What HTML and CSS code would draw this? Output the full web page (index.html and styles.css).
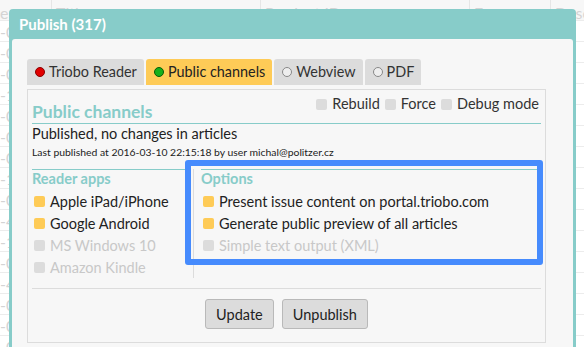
FILE: index.html
```html
<!DOCTYPE html>
<html lang="en">
<head>
  <meta charset="UTF-8" />
  <meta name="viewport" content="width=device-width, initial-scale=1" />
  <title>Publish</title>
  <link rel="stylesheet" href="styles.css">
</head>
<body>

<!-- list underneath the dialog -->
<table class="list">
  <thead>
    <tr><th class="c0">e</th><th class="c1">Title</th><th class="c2">Product ID</th><th class="c3">Free</th><th class="c4">Desc</th></tr>
  </thead>
  <tbody>
    <tr><td>-0</td><td></td><td></td><td></td><td>IA</td></tr>
    <tr><td>-0</td><td></td><td></td><td></td><td>M</td></tr>
    <tr><td>-0</td><td></td><td></td><td></td><td>IA</td></tr>
    <tr><td>-1</td><td></td><td></td><td></td><td></td></tr>
    <tr><td>-0</td><td></td><td></td><td></td><td>TA</td></tr>
    <tr><td>-0</td><td></td><td></td><td></td><td>TA</td></tr>
    <tr><td>-0</td><td></td><td></td><td></td><td></td></tr>
    <tr><td>-1</td><td></td><td></td><td></td><td>n</td></tr>
    <tr><td>-0</td><td></td><td></td><td></td><td>na</td></tr>
    <tr><td>-4</td><td></td><td></td><td></td><td>du</td></tr>
    <tr><td>-1</td><td></td><td></td><td></td><td>vi</td></tr>
    <tr><td>-0</td><td></td><td></td><td></td><td>jv</td></tr>
    <tr><td>-4</td><td></td><td></td><td></td><td>sc</td></tr>
    <tr><td>-0</td><td></td><td></td><td></td><td>tr</td></tr>
    <tr><td>-0</td><td></td><td></td><td></td><td>pl</td></tr>
    <tr><td>-0</td><td></td><td></td><td></td><td></td></tr>
  </tbody>
</table>

<!-- Publish dialog -->
<div class="dialog">
  <div class="dialog-title">Publish (317)</div>
  <div class="dialog-body">
    <div class="tabs">
      <div class="tab"><span class="dot red"></span>Triobo Reader</div>
      <div class="tab active"><span class="dot green"></span>Public channels</div>
      <div class="tab"><span class="dot"></span>Webview</div>
      <div class="tab"><span class="dot"></span>PDF</div>
    </div>

    <div class="panel">
      <div class="panel-head">
        <h2>Public channels</h2>
        <div class="flags">
          <span class="check"><span class="box"></span>Rebuild</span>
          <span class="check"><span class="box"></span>Force</span>
          <span class="check"><span class="box"></span>Debug mode</span>
        </div>
      </div>
      <p class="status">Published, no changes in articles</p>
      <p class="meta">Last published at 2016-03-10 22:15:18 by user michal@politzer.cz</p>

      <div class="columns">
        <div class="col col-apps">
          <h3>Reader apps</h3>
          <div class="item on"><span class="box"></span>Apple iPad/iPhone</div>
          <div class="item on"><span class="box"></span>Google Android</div>
          <div class="item off"><span class="box"></span>MS Windows 10</div>
          <div class="item off"><span class="box"></span>Amazon Kindle</div>
        </div>
        <div class="col col-options">
          <h3>Options</h3>
          <div class="item on"><span class="box"></span>Present issue content on portal.triobo.com</div>
          <div class="item on"><span class="box"></span>Generate public preview of all articles</div>
          <div class="item off"><span class="box"></span>Simple text output (XML)</div>
        </div>
      </div>

      <div class="actions">
        <button>Update</button>
        <button>Unpublish</button>
      </div>
    </div>
  </div>
</div>

<!-- annotation -->
<div class="highlight"></div>

</body>
</html>
```

FILE: styles.css
```css
body {
  margin: 0;
  font-family: 'Lato', 'Liberation Sans', sans-serif;
  background: #fff;
  color: #222;
  overflow: hidden;
  height: 347px;
}

/* background list */
.list {
  border-collapse: collapse;
  width: 620px;
  table-layout: fixed;
  font-size: 16px;
  color: #d4d4d4;
}
.list th {
  height: 20px;
  padding: 0 0 0 4px;
  text-align: left;
  font-weight: normal;
  background: #f7f7f7;
  border-right: 1px solid #e6e6e6;
  line-height: 14px;
  vertical-align: bottom;
  overflow: hidden;
}
.list td {
  height: 20px;
  padding: 0 0 0 3px;
  border-top: 1px solid #ececec;
  border-right: 1px solid #ececec;
  white-space: nowrap;
  overflow: hidden;
}
.list .c0 { width: 51px; padding-left: 0; }
.list td:first-child { padding-left: 0; }
.list .c1 { width: 204px; }
.list .c2 { width: 204px; }
.list .c3 { width: 76px; }

/* dialog */
.dialog {
  position: absolute;
  top: 9px;
  left: 9px;
  width: 561px;
  height: 360px;
  background: #87ccc9;
  border-radius: 4px 4px 0 0;
  padding: 0 3px;
  display: flex;
  flex-direction: column;
}
.dialog-title {
  height: 30px;
  line-height: 30px;
  padding-left: 7px;
  color: #fff;
  font-weight: bold;
  font-size: 15px;
}
.dialog-body {
  flex: 1;
  background: #f7f7f7;
  border-radius: 3px 3px 0 0;
  padding: 20px 27px 0 15px;
}

/* tabs */
.tabs {
  display: flex;
  gap: 2px;
}
.tab {
  height: 26px;
  line-height: 26px;
  padding: 0 7px 0 8px;
  background: #dcdcdc;
  border-radius: 3px 3px 0 0;
  font-size: 14.4px;
  color: #333;
  display: flex;
  align-items: center;
}
.tab.active {
  background: #fecb57;
  color: #222;
}
.dot {
  width: 8px;
  height: 8px;
  border-radius: 50%;
  border: 1px solid #888;
  background: #eee;
  margin-right: 4px;
}
.dot.red {
  background: #e10000;
  border-color: #800;
}
.dot.green {
  background: #16b01a;
  border-color: #075b08;
}

.panel {
  margin-top: 4px;
  border: 1px solid #dcdcdc;
  padding: 0 4px;
}
.panel-head {
  display: flex;
  justify-content: space-between;
  align-items: flex-start;
  border-bottom: 1px solid #87ccc9;
}
.panel-head h2 {
  margin: 0;
  padding-top: 11px;
  line-height: 22px;
  font-size: 17.5px;
  color: #87ccc9;
}
.flags {
  display: flex;
  gap: 5px;
  margin: 5px 2px 0 0;
  font-size: 14.5px;
  line-height: 18px;
  color: #333;
}
.check {
  display: flex;
  align-items: center;
}
.box {
  width: 11px;
  height: 11px;
  border-radius: 2px;
  background: #dcdcdc;
  margin-right: 5px;
  flex: none;
}

.status {
  margin: 1px 0 0;
  font-size: 14.5px;
  line-height: 18px;
}
.meta {
  margin: 2px 0 0;
  font-size: 10.4px;
  line-height: 14px;
}

.columns {
  display: flex;
  margin-top: 10px;
}
.col h3 {
  margin: 0 0 2px;
  border-top: 1px solid #87ccc9;
  font-size: 14.5px;
  line-height: 18px;
  color: #87ccc9;
}
.col-apps {
  width: 153px;
  margin-right: 8px;
}
.col-options {
  flex: 1;
  border-left: 1px solid #dcdcdc;
  padding-left: 7px;
  margin-right: 4px;
}
.item {
  display: flex;
  align-items: center;
  height: 22px;
  font-size: 14.5px;
  padding-left: 2px;
}
.item.on .box {
  background: #fecb57;
}
.item.off {
  color: #c8c8c8;
}

.actions {
  margin-top: 10px;
  border-top: 1px solid #dcdcdc;
  padding: 10px 0 13px;
  display: flex;
  justify-content: center;
  gap: 8px;
}
.actions button {
  height: 30px;
  padding: 0 10px;
  font-family: inherit;
  font-size: 14.5px;
  color: #222;
  background: #dcdcdc;
  border: 1px solid #b9b9b9;
  border-radius: 3px;
}

.highlight {
  position: absolute;
  left: 185px;
  top: 160px;
  width: 358px;
  height: 105px;
  box-sizing: border-box;
  border: 6px solid #468bfd;
  border-radius: 3px;
}
```
